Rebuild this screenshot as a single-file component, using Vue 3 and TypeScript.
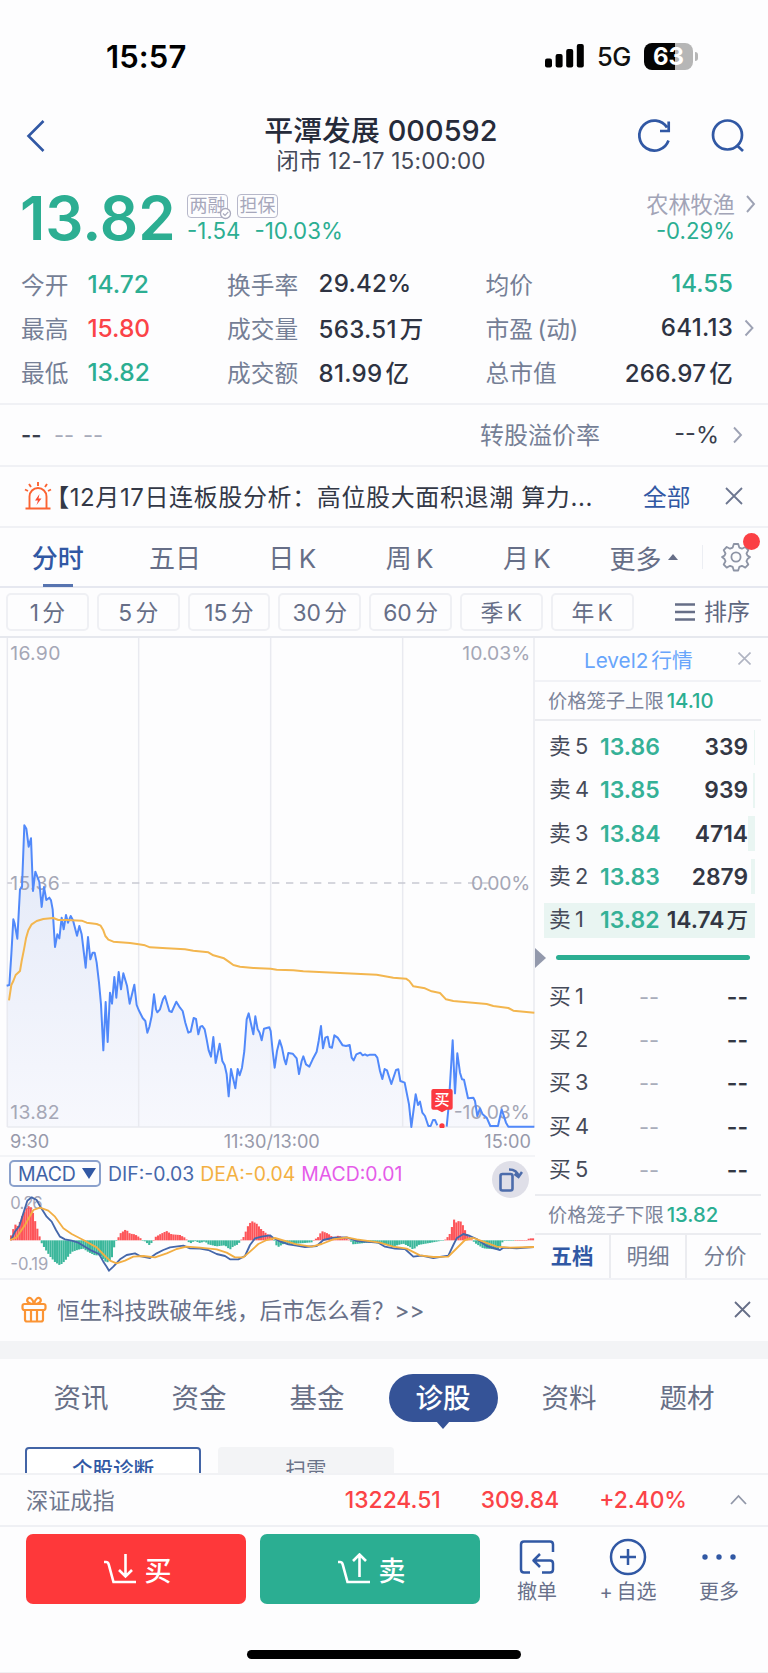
<script setup lang="ts">
type Tone = 'green' | 'red' | 'dark'
interface Stat { label: string; value: string; unit?: string; tone: Tone; arrow?: boolean }

const stats: Stat[][] = [
  [
    { label: '今开', value: '14.72', tone: 'green' },
    { label: '换手率', value: '29.42%', tone: 'dark' },
    { label: '均价', value: '14.55', tone: 'green' },
  ],
  [
    { label: '最高', value: '15.80', tone: 'red' },
    { label: '成交量', value: '563.51', unit: '万', tone: 'dark' },
    { label: '市盈 (动)', value: '641.13', tone: 'dark', arrow: true },
  ],
  [
    { label: '最低', value: '13.82', tone: 'green' },
    { label: '成交额', value: '81.99', unit: '亿', tone: 'dark' },
    { label: '总市值', value: '266.97', unit: '亿', tone: 'dark' },
  ],
]
const periods = ['分时', '五日', '日 K', '周 K', '月 K']
const chips = ['1 分', '5 分', '15 分', '30 分', '60 分', '季 K', '年 K']
const sells = [
  { n: 5, price: '13.86', qty: '339', unit: '', depth: 1 },
  { n: 4, price: '13.85', qty: '939', unit: '', depth: 2 },
  { n: 3, price: '13.84', qty: '4714', unit: '', depth: 7 },
  { n: 2, price: '13.83', qty: '2879', unit: '', depth: 4 },
  { n: 1, price: '13.82', qty: '14.74', unit: '万', depth: 211 },
]
const sections = ['资讯', '资金', '基金', '诊股', '资料', '题材']

// Chart geometry is expressed in thirds of a pixel.
const priceA = '20,614 28,612 34,520 40,415 44,428 52,473 60,325 66,318 73,133 79,143 86,197 93,172 99,330 106,272 118,303 125,378 132,318 139,357 148,350 153,358 158,385 165,498 172,460 178,472 185,410 191,445 198,402 204,425 212,405 219,418 231,464 238,435 245,460 257,560 264,468 271,535 278,515 284,515 290,545 297,605 303,670 310,808 317,663 323,783 330,635 336,668 343,588 349,650 356,573 363,625 370,577 381,614 389,668 403,611 410,672 416,687 428,711 436,720 442,755 448,738 455,705 462,640 468,685 472,694 480,685 489,655 495,645 508,690 515,693 529,662 540,680 548,690 556,725 565,755 572,752 581,711 588,714 595,760 601,737 607,735 614,745 620,775 626,808 633,827 640,768 647,846 659,788 667,840 674,853 680,880 686,946 693,864 706,922 713,864 719,883 726,860 733,810 740,715 746,697 760,760 766,706 773,745 779,755 785,778 792,743 808,739 812,750 818,810 824,860 831,810 839,778 846,800 853,835 858,850 865,816 878,818 890,832 897,879 905,840 910,826 918,850 928,857 938,835 950,812 956,780 963,735 969,802 976,770 983,767 989,798 996,800 1003,763 1013,770 1028,793 1038,795 1049,792 1055,830 1061,838 1069,820 1081,815 1088,823 1095,820 1102,824 1110,821 1125,821 1132,830 1140,870 1147,894 1154,864 1161,868 1174,909 1188,867 1195,865 1201,900 1214,905 1227,970 1234,1038 1247,940 1254,972 1260,962 1267,995 1275,1005 1285,1035 1292,1035 1299,1017 1305,1017 1312,1033'
const priceB = '1340,1037 1346,975 1358,778 1365,937 1372,817 1380,875 1386,895 1392,896 1404,952 1420,950 1425,960 1432,1005 1440,982 1448,1000 1460,1010 1471,1035 1494,1035 1505,985 1518,1025 1525,1037 1603,1037'
const average = '27,658 34,612 40,600 47,582 60,570 65,540 72,505 78,472 85,448 95,430 110,420 130,414 160,411 175,417 200,417 245,419 260,425 290,429 302,434 310,448 316,465 325,476 340,482 390,486 416,490 435,493 450,499 500,502 555,505 580,509 625,514 640,523 672,532 685,541 700,552 720,557 760,561 812,563 830,566 880,568 910,571 1130,581 1180,590 1218,593 1228,600 1240,616 1275,622 1295,631 1320,636 1338,655 1360,660 1460,669 1480,675 1525,681 1540,689 1603,695'
const area = `M20,1038 L${priceA} L1312,1038 Z M1336,1038 L${priceB} L1603,1038 Z`

const dif = '33,270 45,245 58,228 70,190 82,152 95,142 110,150 122,172 140,200 155,215 168,240 180,260 195,268 215,272 235,278 255,290 275,302 297,312 310,335 320,350 327,362 340,350 360,328 380,315 405,310 420,318 450,324 470,310 490,300 510,292 550,287 570,295 600,296 625,300 650,312 675,318 690,328 715,328 735,318 750,285 765,265 785,260 810,256 820,264 840,274 865,283 890,287 915,291 950,288 970,270 1000,263 1040,262 1070,273 1135,278 1155,290 1185,296 1215,297 1240,320 1265,317 1300,324 1345,317 1360,285 1370,265 1390,252 1410,258 1430,267 1460,288 1500,300 1510,293 1550,295 1602,291'
const dea = '30,270 50,262 75,225 100,180 120,173 145,182 165,200 190,235 215,252 250,270 290,292 315,318 330,332 350,340 375,332 400,320 430,318 465,322 500,310 530,297 560,290 600,293 650,298 680,308 705,322 730,322 750,305 775,282 800,270 825,264 860,274 890,283 935,290 965,282 1000,268 1040,262 1070,268 1140,278 1180,290 1220,296 1260,316 1300,321 1345,320 1365,300 1395,270 1420,264 1450,275 1490,290 1530,293 1602,291'

const knots: [number, number][] = [
  [30, 5], [35, 20], [45, 48], [55, 42], [65, 70], [75, 90], [85, 103], [95, 98], [105, 60], [118, 15], [122, 0], [125, -8], [135, -25],
  [150, -48], [165, -65], [180, -75], [195, -62], [215, -35], [235, -28], [250, -25], [265, -35], [285, -45], [300, -45], [320, -68],
  [335, -55], [345, -10], [350, 0], [354, 5], [360, 20], [378, 33], [390, 20], [405, 18], [420, 8], [428, 0], [435, -3], [448, -14],
  [460, -3], [463, 8], [480, 18], [500, 28], [515, 18], [540, 16], [555, 8], [562, 0], [570, -10], [578, -5], [585, -2], [600, -8],
  [615, -3], [625, -12], [650, -18], [675, -15], [690, -28], [700, -18], [715, -12], [722, 0], [730, 8], [745, 45], [755, 58], [770, 50],
  [785, 32], [800, 20], [815, 10], [822, 0], [830, -16], [835, -20], [855, -8], [870, -14], [890, -10], [935, -6], [940, 0], [945, 3],
  [955, 10], [965, 28], [985, 20], [1000, 8], [1015, 14], [1035, 8], [1050, 0], [1060, -12], [1110, -6], [1140, -10], [1180, -18],
  [1210, -10], [1230, -20], [1240, -28], [1255, -14], [1310, -4], [1330, 0], [1338, 3], [1350, 20], [1363, 64], [1370, 52], [1378, 60], [1385, 54],
  [1400, 20], [1410, 8], [1418, 0], [1425, -8], [1450, -24], [1495, -28], [1510, -1], [1580, 1], [1588, 6], [1603, 6],
]
function heightAt(x: number): number {
  for (let i = 1; i < knots.length; i++) {
    const [x0, y0] = knots[i - 1]
    const [x1, y1] = knots[i]
    if (x <= x1) return y0 + ((y1 - y0) * (x - x0)) / (x1 - x0)
  }
  return 0
}
const bars = Array.from({ length: 239 }, (_, i) => {
  const x = 30 + i * 6.58
  const h = heightAt(x + 3.3)
  return { x, y: h > 0 ? 271 - h : 271, h: Math.max(Math.abs(h), 1.5), up: h > 0 }
})
</script>

<template>
  <div class="page">
    <div class="status">
      <span class="time">15:57</span>
      <div class="status-right">
        <svg width="39" height="26" viewBox="0 0 39 26">
          <rect x="0" y="15.5" width="7" height="9" rx="2" /><rect x="10.6" y="11" width="7" height="13.5" rx="2" />
          <rect x="21.2" y="6" width="7" height="18.5" rx="2" /><rect x="31.8" y="1" width="7" height="23.5" rx="2" />
        </svg>
        <span class="net">5G</span>
        <div class="battery"><span>63</span></div>
        <i class="nub"></i>
      </div>
    </div>

    <header class="head">
      <svg class="back" width="20" height="34" viewBox="0 0 20 34"><path d="M17.5 2 2.5 17l15 15" fill="none" stroke="#3158a4" stroke-width="2.6" /></svg>
      <div class="title">
        <div class="t1">平潭发展 000592</div>
        <div class="t2">闭市 12-17 15:00:00</div>
      </div>
      <div class="head-icons">
        <svg width="36" height="36" viewBox="0 0 36 36" fill="none" stroke="#3158a4" stroke-width="2.7"><path d="M32.5 22.5A15 15 0 1 1 31 9.5M32.7 3.5V13H24" /></svg>
        <svg width="36" height="36" viewBox="0 0 36 36" fill="none" stroke="#3158a4" stroke-width="2.7"><circle cx="17.5" cy="17" r="14.5" /><path d="m26.5 27 6.5 6" /></svg>
      </div>
    </header>

    <section class="quote">
      <div class="price">13.82</div>
      <div class="change">
        <div class="tags">
          <span class="tag">两融<svg class="tick" width="13" height="13" viewBox="0 0 13 13"><circle cx="6.5" cy="6.5" r="5" fill="#fff" stroke="#a9aabd" stroke-width="1.3" /><path d="m4 6.5 2 2 3.3-3.7" fill="none" stroke="#a9aabd" stroke-width="1.2" /></svg></span>
          <span class="tag">担保</span>
        </div>
        <div class="delta"><span>-1.54</span><span>-10.03%</span></div>
      </div>
      <div class="industry">
        <div class="ind-name">农林牧渔</div>
        <div class="ind-val">-0.29%</div>
      </div>
      <svg class="chev ind-chev" width="11" height="20" viewBox="0 0 11 20"><path d="m2 2 7 8-7 8" /></svg>
    </section>

    <section class="stats">
      <div v-for="(row, r) in stats" :key="r" class="stat-row">
        <div v-for="(s, c) in row" :key="c" class="stat" :class="'c' + c">
          <span class="lab">{{ s.label }}</span>
          <span class="val" :class="s.tone">{{ s.value }}<i v-if="s.unit">{{ s.unit }}</i></span>
        </div>
        <svg v-if="row[2].arrow" class="chev row-chev" width="10" height="18" viewBox="0 0 10 18"><path d="m1.5 1.5 7 7.5-7 7.5" /></svg>
      </div>
    </section>

    <section class="bond">
      <span class="dash-dark">--</span><span class="dash">--</span><span class="dash">--</span>
      <span class="bond-lab">转股溢价率</span>
      <span class="bond-val">--%</span>
      <svg class="chev" width="11" height="18" viewBox="0 0 11 18"><path d="m2 1.5 7 7.5-7 7.5" /></svg>
    </section>

    <section class="news">
      <svg width="28" height="30" viewBox="0 0 28 30" fill="none" stroke="#fb6332" stroke-width="1.9">
        <path d="M1.5 27.5h25M5.5 27V15.5a8.5 8.5 0 0 1 17 0V27M14 1v4M5 3l2 3M23 3l-2 3M1 8.5l3 1.5M27 8.5 24 10" /><path d="m15.5 13-4.5 6.5h3l-1.5 4.5 5-6.5h-3z" fill="#fb4a30" stroke="none" />
      </svg>
      <span class="news-text"><b>【</b>12月17日连板股分析：<em>高位股大面积退潮 算力...</em></span>
      <span class="news-all">全部</span>
      <svg width="18" height="18" viewBox="0 0 18 18" fill="none" stroke="#6c7690" stroke-width="1.8"><path d="m1 1 16 16M17 1 1 17" /></svg>
    </section>

    <nav class="periods">
      <span v-for="(p, i) in periods" :key="p" class="period" :class="{ on: i === 0 }">{{ p }}</span>
      <span class="more">更多<i></i></span>
      <span class="gear">
        <svg width="30" height="30" viewBox="0 0 30 30" fill="none" stroke="#8d94a5" stroke-width="1.8" stroke-linejoin="round">
          <path d="M12.8 2h4.4l1.1 3.6 2.6 1.1L24.3 5l3 3.1-1.8 3.4 1 2.1L29 15l-2.5 2-1 2.2 1.8 3.3-3 3.1-3.4-1.8-2.6 1.1-1.1 3.6h-4.4l-1.1-3.6-2.6-1.1-3.4 1.8-3-3.1 1.8-3.3-1-2.2L1 15l2.500-1.400 1-2.100L2.700 8.100l3-3.100 3.400 1.700 2.600-1.100z" /><circle cx="15" cy="15" r="4.6" />
        </svg><i></i>
      </span>
    </nav>

    <nav class="chips">
      <span v-for="c in chips" :key="c" class="chip">{{ c }}</span>
      <span class="sort"><svg width="20" height="18" viewBox="0 0 20 18" stroke="#666e87" stroke-width="2.4"><path d="M0 1.5h20M0 9h20M0 16.5h20" /></svg>排序</span>
    </nav>

    <main class="board">
      <div class="charts">
        <svg width="535" height="490" viewBox="0 -429 1605 1470" class="plot">
          <defs><linearGradient id="fill" x1="0" y1="0" x2="0" y2="1"><stop offset="0" stop-color="#e3e9f8" /><stop offset="1" stop-color="#f7f8fd" /></linearGradient></defs>
          <path :d="area" fill="url(#fill)" />
          <path d="M22-429V1038M416-429V1038M812-429V1038M1208-429V1038M1602-429V1038M22 1038H1603" stroke="#e9eaf0" stroke-width="4.5" fill="none" />
          <path d="M186 306H1474" stroke="#c8c9d2" stroke-width="4.5" stroke-dasharray="22 20" />
          <path d="M22 306h14" stroke="#c8c9d2" stroke-width="4.5" />
          <g class="axis">
            <text x="31" y="-364" textLength="150">16.90</text><text x="1591" y="-364" text-anchor="end" textLength="204">10.03%</text>
            <text x="31" y="326" textLength="148">15.36</text><text x="1591" y="326" text-anchor="end" textLength="178">0.00%</text>
            <text x="31" y="1013" textLength="148">13.82</text><text x="1589" y="1013" text-anchor="end" textLength="228">-10.03%</text>
          </g>
          <g fill="none" stroke="#5189fa" stroke-width="6" stroke-linejoin="round"><polyline :points="priceA" /><polyline :points="priceB" /></g>
          <polyline :points="average" fill="none" stroke="#f3b64f" stroke-width="6" stroke-linejoin="round" />
          <path d="M1300 924h52q6 0 6 6v50q0 6-6 6h-12l-14 8-14-8h-12q-6 0-6-6v-50q0-6 6-6z" fill="#fb3a40" />
          <text x="1326" y="972" text-anchor="middle" class="mark">买</text>
          <circle cx="1326" cy="1035" r="8" fill="#fb3a40" />
        </svg>
        <div class="times"><span>9:30</span><span>11:30/13:00</span><span>15:00</span></div>
        <div class="macd-head">
          <span class="macd-btn">MACD<i></i></span>
          <span class="k dif">DIF:-0.03</span><span class="k dea">DEA:-0.04</span><span class="k mac">MACD:0.01</span>
          <span class="rotate"><svg width="24" height="26" viewBox="0 0 24 26" fill="none" stroke="#4c6cab" stroke-width="2.6"><rect x="1.5" y="7" width="12" height="16.5" rx="2" /><path d="M10 2.5c5 0 8.5 2 9.5 7M15.5 7l4 3 3.5-5" /></svg></span>
        </div>
        <svg width="535" height="88" viewBox="0 120 1605 264" class="plot">
          <g class="axis small"><text x="31" y="178" textLength="97">0.26</text><text x="31" y="361" textLength="114">-0.19</text></g>
          <rect v-for="(b, i) in bars" :key="i" :x="b.x" :y="b.y" width="6.3" :height="b.h" :fill="b.up ? '#fd5559' : '#3bb79b'" />
          <g fill="none" stroke-width="5.5" stroke-linejoin="round"><polyline :points="dif" stroke="#4567aa" /><polyline :points="dea" stroke="#f2ae43" /></g>
        </svg>
      </div>

      <aside class="book">
        <div class="l2"><span>Level2<i>行情</i></span><svg width="13" height="13" viewBox="0 0 13 13" stroke="#b0b4c2" stroke-width="1.6"><path d="m.5.5 12 12M12.5.5l-12 12" /></svg></div>
        <div class="limit">价格笼子上限<b>14.10</b></div>
        <div class="levels sell">
          <div v-for="s in sells" :key="s.n" class="level">
            <i class="depth" :style="{ width: s.depth + 'px' }"></i>
            <span class="lv">卖 {{ s.n }}</span><span class="lp">{{ s.price }}</span><span class="lq">{{ s.qty }}<i v-if="s.unit">{{ s.unit }}</i></span>
          </div>
        </div>
        <div class="ratio"><i class="tri"></i><i class="line"></i></div>
        <div class="levels buy">
          <div v-for="n in 5" :key="n" class="level"><span class="lv">买 {{ n }}</span><span class="nop">--</span><span class="lq">--</span></div>
        </div>
        <div class="limit low">价格笼子下限<b>13.82</b></div>
        <div class="book-tabs"><span class="on">五档</span><span>明细</span><span>分价</span></div>
      </aside>
    </main>

    <section class="promo">
      <svg width="26" height="27" viewBox="0 0 26 27" fill="none" stroke="#fb9434" stroke-width="2.2"><rect x="1.5" y="8" width="23" height="6" rx="2" /><path d="M4 14v9.5q0 2 2 2h14q2 0 2-2V14M10 14v11M16 14v11M13 8C9 8 5 6 6.5 3 8.5 0 12 3 13 8c1-5 4.5-8 6.5-5C21 6 17 8 13 8" /></svg>
      <span>恒生科技跌破年线，后市怎么看？<em>&gt;&gt;</em></span>
      <svg width="17" height="17" viewBox="0 0 17 17" stroke="#666e87" stroke-width="1.8"><path d="m1 1 15 15M16 1 1 16" /></svg>
    </section>
    <div class="gap"></div>

    <nav class="sections"><span v-for="s in sections" :key="s" :class="{ on: s === '诊股' }">{{ s }}</span></nav>
    <div class="subs"><span class="on">个股诊断</span><span>扫雷</span></div>

    <section class="index">
      <span class="ix-name">深证成指</span><span class="n1">13224.51</span><span class="n2">309.84</span><span class="n3">+2.40%</span>
      <svg width="17" height="11" viewBox="0 0 17 11" fill="none" stroke="#9197a8" stroke-width="1.8"><path d="m1 10 7.5-8L16 10" /></svg>
    </section>

    <footer class="actions">
      <button class="buy-btn"><svg width="34" height="32" viewBox="0 0 34 32"><path d="M1 9h2q2 0 2.7 2.3L10.5 29H33M22.5 1v22M16 17l6.500 6.500L29 17" /></svg>买</button>
      <button class="sell-btn"><svg width="34" height="32" viewBox="0 0 34 32"><path d="M1 9h2q2 0 2.7 2.3L10.5 29H33M22.5 24V2M16 8l6.500-6.500L29 8" /></svg>卖</button>
      <div class="tool"><svg width="38" height="38" viewBox="0 0 38 38"><path d="M12 34.5H6q-3 0-3-3v-25q0-3 3-3h26q3 0 3 3V14M16 22.5h16q3 0 3 3v6q0 3-3 3h-8M22 16l-6.5 6.5L22 29" /></svg><span>撤单</span></div>
      <div class="tool"><svg width="38" height="38" viewBox="0 0 38 38"><circle cx="19" cy="19" r="17" /><path d="M19 11v16M11 19h16" /></svg><span>+ 自选</span></div>
      <div class="tool"><svg width="38" height="38" viewBox="0 0 38 38"><g fill="#3158a4" stroke="none"><circle cx="5" cy="19" r="2.7" /><circle cx="19" cy="19" r="2.7" /><circle cx="33" cy="19" r="2.7" /></g></svg><span>更多</span></div>
    </footer>
    <div class="home"></div>
  </div>
</template>

<style>
body { background: #fdfdfe; }
</style>

<style scoped>
* { box-sizing: border-box; }
i, em { font-style: normal; }
.page { width: 768px; height: 1673px; overflow: hidden; background: #fdfdfe; font-family: Inter, "Noto Sans CJK SC", sans-serif; color: #2b3040; display: flex; flex-direction: column; white-space: nowrap; border-bottom: 1px solid #f0f0f3; }
.page > * { flex: none; }
.green { color: #2cae92; } .red { color: #fb4347; } .dark { color: #2e3342; letter-spacing: .25px; }
.chev { fill: none; stroke: #9da2b4; stroke-width: 1.9; }

.status { height: 100px; display: flex; justify-content: space-between; padding: 36px 70px 0 106px; }
.time { font-size: 31px; line-height: 42px; font-weight: 600; color: #000; letter-spacing: .1px; }
.status-right { display: flex; align-items: center; height: 40px; color: #111; }
.net { font-size: 25.5px; margin-left: 13px; width: 47px; font-weight: 500; letter-spacing: -.6px; }
.battery { width: 49px; height: 27px; border-radius: 8px; background: linear-gradient(90deg, #050505 64%, #b6b6b6 64%); color: #fff; text-align: center; font-size: 24px; line-height: 27px; font-weight: 700; }
.nub { width: 3px; height: 9px; background: #b6b6b6; border-radius: 0 3px 3px 0; margin-left: 2px; }

.head { height: 80px; display: grid; grid-template-columns: 120px 522px 1fr; }
.back { margin: 19px 0 0 26px; }
.title { text-align: center; }
.t1 { font-size: 28.8px; line-height: 34px; margin-top: 14px; font-weight: 500; color: #262b3a; letter-spacing: .1px; }
.t2 { font-size: 22.5px; line-height: 26px; color: #434858; letter-spacing: .25px; }
.head-icons { display: flex; gap: 38px; padding-top: 18px; margin-left: -6px; }

.quote { height: 74px; display: flex; padding-left: 20px; }
.price { width: 167px; font-size: 60px; line-height: 76px; font-weight: 600; color: #2cae92; }
.change { padding-top: 14px; width: 300px; }
.tags { display: flex; gap: 9px; height: 24px; }
.tag { position: relative; border: 1.5px solid #b7b8ca; border-radius: 4px; font-size: 18px; line-height: 22px; width: 41px; height: 24px; text-align: center; color: #a6a7bb; }
.tick { position: absolute; right: -5px; bottom: -3px; }
.delta { display: flex; gap: 14px; font-size: 22.3px; line-height: 25px; color: #2cae92; }
.industry { margin-left: auto; text-align: right; padding-top: 11px; }
.ind-name { font-size: 22.2px; line-height: 28px; color: #a2a4b7; }
.ind-val { font-size: 22.2px; line-height: 23px; color: #2cae92; }
.ind-chev { margin: 14px 12px 0 10px; }

.stats { height: 151px; padding-top: 7.5px; border-bottom: 2px solid #f0f1f5; }
.stat-row { height: 44px; display: grid; grid-template-columns: 206px 258.5px 247.5px 1fr; padding-left: 21px; align-items: center; }
.stat { display: flex; align-items: center; }
.lab { font-size: 23.7px; color: #757f96; word-spacing: -2px; }
.val { font-size: 24.1px; font-weight: 500; }
.val i { margin-left: 3px; font-size: 23.5px; }
.c0 .val { margin-left: 19px; font-size: 24.5px; } .c1 .val { margin-left: 20.5px; } .c2 .val { margin-left: auto; }
.row-chev { margin-left: 11px; }

.bond { height: 62px; display: flex; align-items: center; padding: 0 25px 1px 21px; border-bottom: 2px solid #f0f1f5; font-size: 24px; }
.dash-dark { color: #3a3f4d; font-weight: 600; font-size: 22px; width: 33px; } .dash { color: #a7abba; width: 29px; font-size: 22px; }
.bond-lab { color: #757f96; margin-left: 368px; width: 122px; margin-top: -2px; }
.bond-val { margin-left: auto; margin-right: 13px; color: #3a3f4d; font-size: 23.5px; }

.news { height: 61px; display: flex; align-items: center; padding: 0 25px 2px 24px; border-bottom: 2px solid #f0f1f5; font-size: 24px; }
.news-text { width: 590px; color: #333846; letter-spacing: .62px; }
.news-text b { font-weight: 700; margin-left: -7px; }
.news-all { color: #3158a4; font-size: 23.7px; margin-left: 1px; }
.news svg:last-child { margin-left: auto; }

.periods { height: 60px; display: flex; align-items: center; border-bottom: 2px solid #e6e8f0; font-size: 26px; color: #666e87; }
.period { width: 117.3px; text-align: center; height: 58px; line-height: 61px; position: relative; word-spacing: -3px; padding-right: 2px; }
.period.on { color: #3158a4; font-weight: 500; }
.period.on::after { content: ""; position: absolute; left: 43px; bottom: -1px; width: 30px; height: 3px; background: #5774b0; }
.more { margin-left: 23px; display: flex; align-items: center; width: 93px; }
.more i { border: 5px solid transparent; border-top: 0; border-bottom: 6px solid #666e87; margin-left: 6px; }
.gear { position: relative; border-left: 1px solid #eceef3; height: 24px; padding-left: 18px; }
.gear svg { margin-top: -3px; display: block; }
.gear i { position: absolute; width: 17px; height: 17px; border-radius: 50%; background: #fb4045; left: 40px; top: -12px; }

.chips { height: 50px; display: flex; align-items: center; border-bottom: 2px solid #e6e8ee; padding-left: 6px; gap: 8px; }
.chip { width: 82.8px; height: 38px; border: 2px solid #eff0f4; border-radius: 5px; text-align: center; font-size: 22.8px; line-height: 35px; color: #666e87; word-spacing: -3px; }
.sort { margin-left: auto; margin-right: 18px; display: flex; align-items: center; gap: 9px; font-size: 23px; line-height: 34px; padding-bottom: 1px; color: #5f6780; }

.board { height: 642px; display: flex; border-bottom: 2px solid #f1f2f6; }
.charts { width: 535px; display: flex; flex-direction: column; }
.plot { display: block; flex: none; }
.axis text { font-size: 58px; fill: #a5a7b6; }
.axis.small text { font-size: 50px; }
.mark { font-size: 46px; fill: #fff; font-weight: 500; }
.times { height: 29px; display: flex; justify-content: space-between; font-size: 18.2px; line-height: 27px; color: #9799aa; padding: 0 4px 0 10px; border-bottom: 2px solid #f3f4f7; }
.times span:nth-child(2) { margin-left: 10px; }
.macd-head { height: 33px; display: flex; align-items: center; padding-left: 9px; font-size: 19.4px; position: relative; }
.macd-btn { width: 92px; height: 27px; border: 2px solid #8ba1cc; border-radius: 5px; color: #3f62a6; display: flex; align-items: center; padding-left: 7px; font-size: 19.5px; letter-spacing: -.3px; }
.macd-btn i { border: 7px solid transparent; border-bottom: 0; border-top: 11px solid #3158a4; margin-left: 6px; }
.k { margin-left: 7px; } .dif { color: #4668ab; } .dea { color: #f3b042; margin-left: 6px; } .mac { color: #e55be9; margin-left: 6px; }
.rotate { position: absolute; left: 492px; top: 4px; width: 37px; height: 37px; border-radius: 50%; background: #dfdfe8; display: flex; align-items: center; justify-content: center; }

.book { width: 226px; }
.l2 { height: 44px; border-bottom: 2px solid #f1f2f6; display: flex; align-items: center; padding: 0 10px 1px 49px; color: #68a5fb; font-size: 20.7px; justify-content: space-between; }
.l2 i { margin-left: 3px; }
.limit { height: 39px; border-bottom: 2px solid #ebecf0; padding-left: 13px; font-size: 19.3px; line-height: 37px; color: #7c849a; }
.limit b { color: #2cae92; font-weight: 500; font-size: 20.3px; margin-left: 3px; }
.levels { display: flex; flex-direction: column; }
.sell { padding-top: 4.5px; }
.level { height: 43.3px; display: flex; align-items: center; position: relative; padding: 0 13px 0 14px; }
.level > span { position: relative; }
.lv { font-size: 21.8px; width: 51px; color: #454a59; word-spacing: -2px; line-height: 30px; margin-top: -2px; }
.lp { font-size: 23px; font-weight: 600; color: #35b197; }
.lq { font-size: 22.8px; font-weight: 600; margin-left: auto; color: #333744; line-height: 30px; }
.lq i { margin-left: 2px; font-weight: 500; font-size: 21.5px; }
.depth { position: absolute; right: 6px; top: 4px; height: 35px; background: #e9f5f2; }
.ratio { height: 33px; display: flex; align-items: center; padding-bottom: 1px; }
.tri { border: 10px solid transparent; border-right: 0; border-left: 11px solid #9399ac; }
.line { width: 194px; height: 5px; border-radius: 3px; background: #2cae92; margin-left: 10px; }
.nop { color: #a9adbb; font-size: 22px; margin-left: 39px; }
.buy { height: 219.5px; }
.low { border-top: 2px solid #ebecf0; height: 41px; }
.book-tabs { display: grid; grid-template-columns: repeat(3, 76px); height: 43px; }
.book-tabs span { border-right: 2px solid #ebecf0; text-align: center; font-size: 21.5px; line-height: 43px; color: #757d94; }
.book-tabs span:last-child { border: 0; }
.book-tabs .on { color: #3158a4; font-weight: 700; }

.promo { height: 61px; display: flex; align-items: center; padding: 0 17px 3px 21px; font-size: 22.5px; color: #687089; }
.promo span { margin-left: 10px; }
.promo svg:last-child { margin-left: auto; }
.gap { height: 18px; background: #f3f4f6; }
.sections { height: 88px; display: flex; padding: 15px 22px 0; font-size: 27.5px; color: #676f86; }
.sections span { flex: none; width: 118px; text-align: center; height: 48px; line-height: 48px; }
.sections .on { width: 109px; margin: 0 12.5px; background: #355397; border-radius: 24px; color: #fff; font-weight: 500; position: relative; }
.sections .on::after { content: ""; position: absolute; left: 47px; top: 47px; border: 7px solid transparent; border-bottom: 0; border-top: 8px solid #355397; }
.subs { height: 26px; overflow: hidden; display: flex; gap: 17px; padding-left: 25px; }
.subs span { width: 176px; height: 50px; border-radius: 4px; background: #f3f4f6; text-align: center; font-size: 20.5px; line-height: 45px; color: #6b7389; }
.subs .on { background: #fff; border: 2px solid #4264a6; color: #3158a4; font-weight: 500; line-height: 42px; }

.index { height: 54px; border-top: 2px solid #f1f2f5; border-bottom: 2px solid #eff0f4; display: flex; align-items: center; padding: 0 21px 2px 26px; font-size: 22.2px; color: #fb4347; }
.ix-name { color: #6f778d; margin-right: auto; }
.n1, .n2, .n3 { font-weight: 500; font-size: 22.8px; }
.n2 { margin-left: 40px; } .n3 { margin-left: 40px; } .index svg { margin-left: 43px; }

.actions { height: 122px; display: flex; padding: 7px 0 0 25.5px; }
.buy-btn, .sell-btn { width: 220px; height: 70px; border: 0; border-radius: 7px; color: #fff; font: 500 27px Inter, "Noto Sans CJK SC", sans-serif; display: flex; align-items: center; justify-content: center; gap: 8px; padding: 0 0 0 3px; }
.buy-btn { background: #fe383a; } .sell-btn { background: #2bae92; margin-left: 14px; margin-right: 12px; }
.buy-btn svg, .sell-btn svg { fill: none; stroke: #fff; stroke-width: 2.6; }
.tool { width: 91px; display: flex; flex-direction: column; align-items: center; padding-top: 4px; font-size: 20px; line-height: 32px; color: #68708a; word-spacing: -2px; }
.tool svg { fill: none; stroke: #3158a4; stroke-width: 2.5; stroke-linejoin: round; }
.home { width: 274px; height: 9px; border-radius: 5px; background: #000; margin: 1px 0 0 247px; }
</style>
